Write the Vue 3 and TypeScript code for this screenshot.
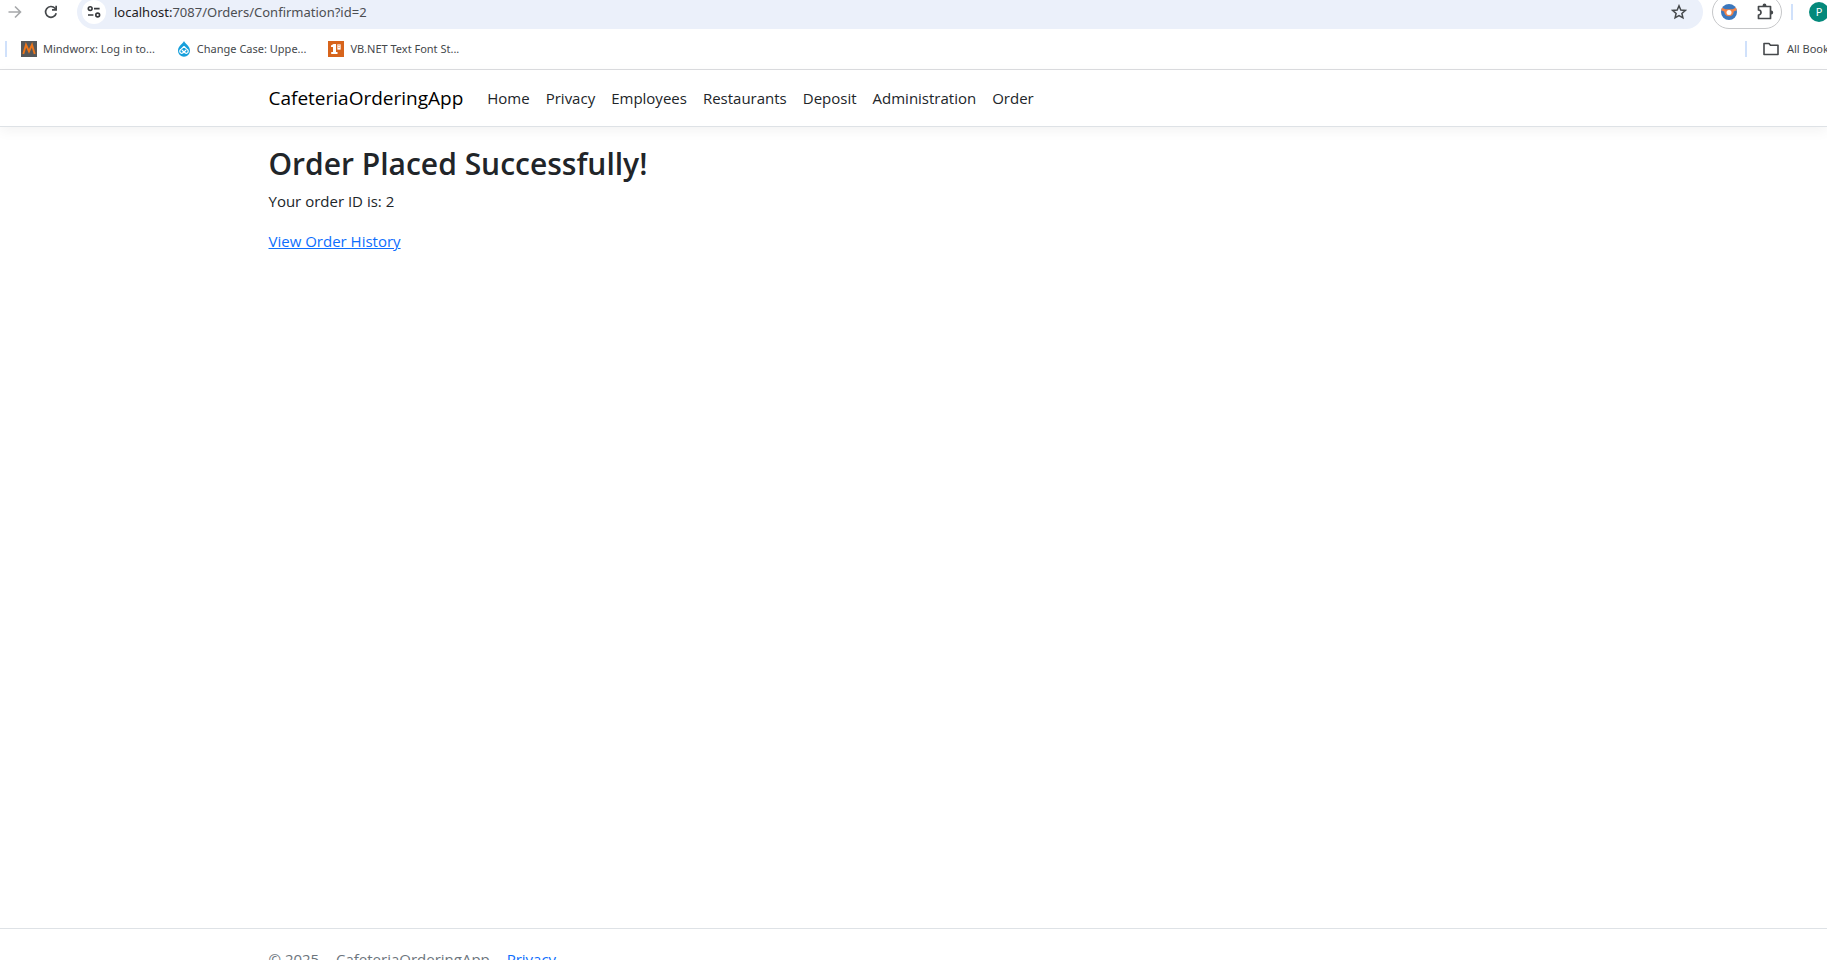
<script setup lang="ts">
interface NavItem { label: string; href: string }
const navItems: NavItem[] = [
  { label: 'Home', href: '#home' },
  { label: 'Privacy', href: '#privacy' },
  { label: 'Employees', href: '#employees' },
  { label: 'Restaurants', href: '#restaurants' },
  { label: 'Deposit', href: '#deposit' },
  { label: 'Administration', href: '#administration' },
  { label: 'Order', href: '#order' },
]
const orderId = 2
</script>

<template>
  <div class="window">
    <div class="chrome">
      <div class="toolbar">
        <button class="tool forward" aria-label="Forward" disabled>
          <svg width="16" height="16" viewBox="0 0 16 16" fill="none" stroke="#a6a8aa" stroke-width="1.6"><path d="M1.5 8H13M8 2.5 13.5 8 8 13.5" /></svg>
        </button>
        <button class="tool reload" aria-label="Reload">
          <svg width="16" height="16" viewBox="0 0 16 16"><path d="M13.2 9.2A5.4 5.4 0 1 1 12 4.3L13.2 5.6" fill="none" stroke="#45484b" stroke-width="1.7" /><path d="M14 1.8V6.8H9V5.1H12.3V1.8Z" fill="#45484b" /></svg>
        </button>
        <div class="address">
          <button class="site-info" aria-label="View site information">
            <svg width="14" height="14" viewBox="0 0 14 14" fill="none" stroke="#36383b" stroke-width="1.6"><circle cx="3.2" cy="3.6" r="1.9" /><path d="M7 3.6H12.6M1 10H6.4" /><circle cx="10.7" cy="10" r="1.9" /></svg>
          </button>
          <span class="url"><span class="host">localhost:</span>7087/Orders/Confirmation?id=2</span>
          <button class="tool star" aria-label="Bookmark this tab">
            <svg width="16" height="16" viewBox="0 0 16 16"><path d="M8 1.8 9.8 6l4.5.4-3.4 3 1 4.4L8 11.5l-3.9 2.3 1-4.4-3.4-3L6.2 6Z" fill="none" stroke="#45484b" stroke-width="1.5" /></svg>
          </button>
        </div>
        <div class="extensions">
          <button class="tool" aria-label="Interceptor">
            <svg width="16" height="16" viewBox="0 0 16 16"><circle cx="8" cy="8" r="8" fill="#3c78bd" /><path d="M1 3.800 4.500 5.300H11.500L15 3.800 15.800 6.300 12.800 7.500A4.800 4.800 0 1 1 3.200 7.500L.2 6.300Z" fill="#f58345" /><circle cx="8" cy="8.400" r="2.500" fill="#fff" /></svg>
          </button>
          <button class="tool" aria-label="Extensions">
            <svg width="17" height="18" viewBox="0 0 17 18"><path d="M1.500 3.500H13.500V15.500H1.500V12A2.500 2.500 0 0 0 1.500 7Z" fill="none" stroke="#45484b" stroke-width="1.700" stroke-linejoin="round" /><path d="M5.600 3V2.500A1.900 1.900 0 0 1 9.400 2.500V3ZM14 7.600H14.300A1.900 1.900 0 0 1 14.300 11.400H14Z" fill="#45484b" /></svg>
          </button>
        </div>
        <span class="divider"></span>
        <button class="profile" aria-label="Profile">P</button>
      </div>

      <div class="bookmarks">
        <span class="divider first"></span>
        <a class="bookmark" href="#mindworx">
          <svg width="16" height="16" viewBox="0 0 16 16"><path d="M0 0H16V16H0Z" fill="#555759" /><path d="M2.300 13 5 3.800 8 10.500 11 3.800 13.700 13" fill="none" stroke="#ed7519" stroke-width="1.900" /></svg>
          <span>Mindworx: Log in to...</span>
        </a>
        <a class="bookmark" href="#change-case">
          <svg width="14" height="16" viewBox="0 0 14 16"><path d="M7 0C8 2.700 13 5 13 9.700A6 6 0 0 1 1 9.700C1 5 6 2.700 7 0Z" fill="#169fdb" /><path d="M7 5.300 10.300 8.600A2 2 0 0 1 9.800 12.200Q8.500 12.600 7 11L4.900 9M7 5.300 3.700 8.600A2 2 0 0 0 4.200 12.200Q5.500 12.600 7 11L9.100 9" fill="none" stroke="#fff" stroke-width="1.200" /></svg>
          <span>Change Case: Uppe...</span>
        </a>
        <a class="bookmark" href="#vbnet">
          <svg width="16" height="16" viewBox="0 0 16 16"><path d="M0 0H16V16H0Z" fill="#d7641c" /><path d="M3 4.500 5.500 3H8V11H9.500V13H3.200V11H5V6H3Z" fill="#fff" /><path d="M9 3H13V9H9ZM10.300 4.300H11.700M10.300 6.300H11.700" fill="#fff" stroke="#d7641c" stroke-width=".7" /></svg>
          <span>VB.NET Text Font St...</span>
        </a>
        <span class="divider last"></span>
        <button class="all-bookmarks">
          <svg width="16" height="14" viewBox="0 0 16 14"><path d="M1 1.500H6L7.500 3.300H15V12.500H1Z" fill="none" stroke="#45484b" stroke-width="1.600" stroke-linejoin="round" /></svg>
          <span>All Bookmarks</span>
        </button>
      </div>
    </div>

    <header class="site-header">
      <nav class="container nav">
        <a class="brand" href="#home">CafeteriaOrderingApp</a>
        <a v-for="item in navItems" :key="item.label" class="nav-link" :href="item.href">{{ item.label }}</a>
      </nav>
    </header>

    <main class="container content">
      <h2>Order Placed Successfully!</h2>
      <p>Your order ID is: {{ orderId }}</p>
      <a class="link" href="#history">View Order History</a>
    </main>

    <footer class="site-footer">
      <div class="container credits">
        <span>© 2025</span><span>-</span><span>CafeteriaOrderingApp</span><span>-</span><a class="link" href="#privacy">Privacy</a>
      </div>
    </footer>
  </div>
</template>

<style>
body { margin: 0; background: #fff; }
</style>

<style scoped>
* { box-sizing: border-box; }
.window {
  display: flex;
  flex-direction: column;
  height: 100vh;
  overflow: hidden;
  color: #212529;
  font: 15px/24px "Segoe UI", "Open Sans", "Noto Sans", sans-serif;
}
button { border: 0; padding: 0; background: none; font: inherit; color: inherit; }
a { color: inherit; text-decoration: none; }
svg { display: block; flex: none; }
.chrome { flex: none; border-bottom: 1px solid #dcdde0; overflow: hidden; font-family: "Segoe UI", "Noto Sans", sans-serif; }
.toolbar { display: flex; align-items: center; height: 34px; margin-top: -5px; margin-right: -2px; }
.tool { flex: none; display: grid; place-items: center; }
.forward { margin-left: 7px; }
.reload { margin-left: 20px; }
.address {
  flex: 1;
  display: flex;
  align-items: center;
  height: 34px;
  margin-left: 18px;
  padding: 0 16px 0 5px;
  border-radius: 17px;
  background: #ebf0fa;
}
.site-info { display: grid; place-items: center; width: 24px; height: 24px; border-radius: 50%; background: #fff; }
.url { flex: 1; margin-left: 8px; font-size: 13px; color: #4b4e52; }
.host { color: #1f2022; }
.extensions {
  display: flex;
  align-items: center;
  justify-content: space-between;
  width: 70px;
  height: 34px;
  margin-left: 9px;
  padding: 0 7px 0 8px;
  border: 1px solid #c6c7c9;
  border-radius: 17px;
}
.divider { flex: none; width: 2px; height: 16px; background: #d0e1fb; }
.toolbar .divider { margin: 0 16px 0 9px; }
.profile { flex: none; width: 20px; height: 20px; border-radius: 50%; background: #04897b; color: #fff; font-size: 11px; line-height: 20px; }
.bookmarks { display: flex; align-items: center; height: 40px; color: #45484b; font-size: 11px; }
.first { margin: 0 14px 0 5px; }
.bookmark { display: flex; align-items: center; gap: 6px; margin-right: 22px; white-space: nowrap; }
.last { margin-left: auto; }
.all-bookmarks { display: flex; align-items: center; gap: 8px; width: 64px; margin-left: 16px; overflow: hidden; white-space: nowrap; }
.container { width: 100%; max-width: 1320px; margin: 0 auto; padding: 0 15px; }
.site-header { flex: none; border-bottom: 1px solid #dee2e6; box-shadow: 0 4px 12px rgba(0, 0, 0, .05); }
.nav { display: flex; align-items: center; height: 56px; gap: 16px; }
.brand { margin-right: 8px; color: #000; font-size: 19px; }
.content { flex: 1; padding-top: 18px; }
h2 { margin: 0 0 6px; font-size: 30px; line-height: 38px; font-weight: 600; }
p { margin: 0 0 16px; }
.link { color: #0d6efd; }
.content .link { text-decoration: underline; }
.site-footer { flex: none; height: 61px; margin-bottom: -29px; border-top: 1px solid #dee2e6; color: #6c757d; line-height: 60px; }
.credits { display: flex; gap: 6px; }
</style>
